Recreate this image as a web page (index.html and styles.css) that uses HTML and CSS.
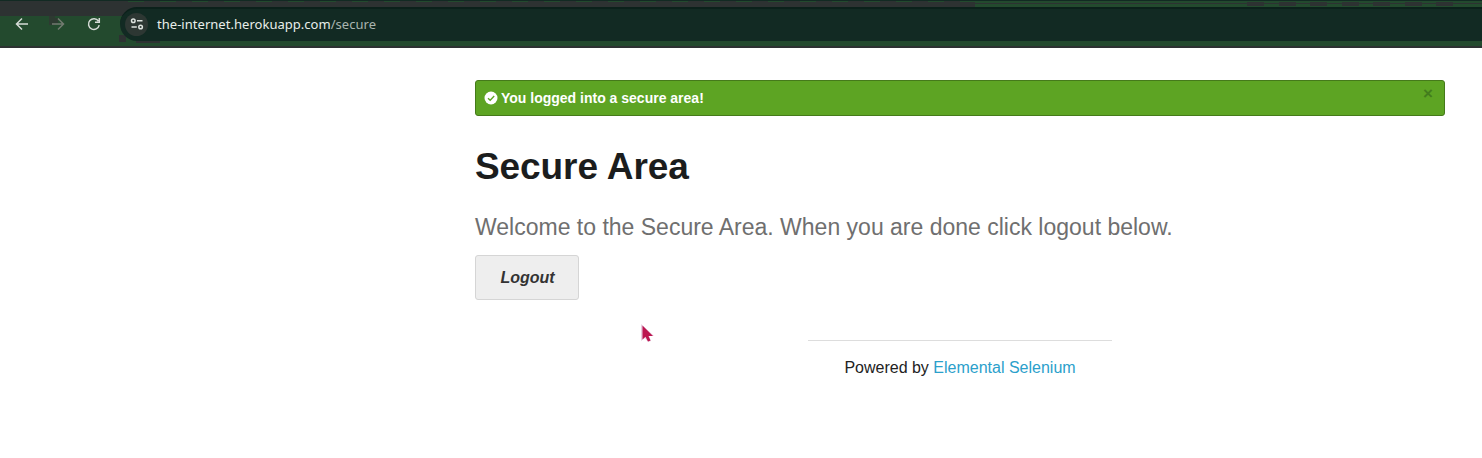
FILE: index.html
```html
<!DOCTYPE html>
<html lang="en">
<head>
<meta charset="utf-8">
<title>The Internet</title>
<link rel="stylesheet" href="styles.css">
</head>
<body>
<header class="toolbar">
  <div class="tabstrip"><span class="tabs-left"></span><span class="tabs-right"><span class="tab-marks"></span></span></div>
  <nav class="nav">
    <svg class="nav-icon" viewBox="0 0 16 16"><path d="M14 8H2.5M8 2.5L2.500 8L8 13.5"/></svg>
    <svg class="nav-icon muted" viewBox="0 0 16 16"><path class="patch" d="M-1 0h6v2h3v5h-2v2h-7z"/><path d="M2 8h11.5M8 2.500L13.500 8L8 13.5"/></svg>
    <svg class="nav-icon" viewBox="0 0 16 16"><path d="M13.2 9.2A5.4 5.4 0 1 1 12.4 5M13.3 2v4.3H9"/></svg>
  </nav>
  <div class="address">
    <span class="site-info"><svg viewBox="0 0 14 14"><circle cx="3.3" cy="3.7" r="1.8"/><path d="M7 3.7h5.5M1.5 10h5.3"/><circle cx="10.6" cy="10" r="1.8"/></svg></span>
    <span class="url">the-internet.herokuapp.com<span class="path">/secure</span></span>
  </div>
</header>
<main class="page">
  <div class="alert">
    <svg class="check" viewBox="0 0 14 14"><circle cx="7" cy="7" r="6.5"/><path d="M4 7.2l2.2 2.1L10.2 5"/></svg>
    <span class="message">You logged into a secure area!</span>
    <span class="close">×</span>
  </div>
  <h1>Secure Area</h1>
  <h2>Welcome to the Secure Area. When you are done click logout below.</h2>
  <a class="button">Logout</a>
</main>
<footer class="footer">Powered by <a>Elemental Selenium</a></footer>
<svg class="cursor" viewBox="0 0 16 20"><path class="shade" d="M1 1v17l4-3 3 4 3-1-2-5h5z"/><path class="arrow" d="M2.500 2.500v14l3-2.800 2.500 4.800 2.500-1-2-4.500h4.500z"/></svg>
</body>
</html>
```
FILE: styles.css
```css
* { box-sizing: border-box; }
body { margin: 0; height: 458px; overflow: hidden; background: #fff; font-family: "Liberation Sans", Arial, sans-serif; }
.toolbar { height: 48px; display: grid; grid-template: 7px 34px / 120px 1fr; background: linear-gradient(#2d3232, #2d3232) 136px 41px / 24px 2px no-repeat, linear-gradient(#2d3232, #2d3232) 119px 35px / 7px 7px no-repeat, linear-gradient(#2d3232 16px, #234a2e 16px); border-bottom: 2px solid #2d3232; }
.tabstrip { grid-column: 1 / 3; display: flex; border-top: 1px solid #122a23; }
.tabs-left { width: 975px; background: repeating-linear-gradient(90deg, #234a2e 0 16px, transparent 16px 32px) 128px 0 / 847px 1px no-repeat, #2d3232; }
.tabs-right { flex: 1; display: flex; align-items: center; padding-left: 272px; background: linear-gradient(#234a2e 2px, #2d3232 2px 3px, #234a2e 3px); }
.tab-marks { width: 210px; height: 4px; background: repeating-linear-gradient(90deg, #2d3232 0 17px, transparent 17px 31.5px); }
.nav { display: flex; align-items: center; gap: 20px; padding-left: 14px; }
.nav-icon { width: 16px; height: 16px; fill: none; stroke: #d5dbd6; stroke-width: 1.5; overflow: visible; }
.muted { stroke: #727b70; }
.muted .patch { fill: #2d3a31; stroke: none; }
.address { display: flex; align-items: center; gap: 9px; padding: 0 0 2px 5px; background: #122a23; border-top: 2px solid #0b211b; border-radius: 17px 0 0 17px; }
.site-info { width: 23px; height: 23px; display: grid; place-items: center; background: #2d3733; border-radius: 50%; }
.site-info svg { width: 14px; height: 14px; fill: none; stroke: #dce2de; stroke-width: 1.5; }
.url { font: 13px "Noto Sans", sans-serif; letter-spacing: 0.03px; color: #e8eeea; }
.path { color: #a9b5af; }
.page { margin-left: 475px; width: 970px; padding-top: 32px; }
.alert { height: 36px; display: flex; align-items: center; padding: 0 11px 0 8px; background: #5da423; border: 1px solid #457a1a; border-radius: 3px; color: #fff; font-size: 14px; font-weight: bold; }
.check { width: 14px; height: 14px; margin-right: 3px; fill: #fff; }
.check path { fill: none; stroke: #5da423; stroke-width: 1.3; }
.close { margin: -9px 0 0 auto; font-size: 17px; color: #437d1d; }
h1 { margin: 24px 0 0; font-size: 37px; line-height: 54px; letter-spacing: -0.08px; color: #1b1d1d; }
h2 { margin: 17px 0 0; font-size: 23px; font-weight: normal; line-height: 32px; color: #6f6f6f; white-space: nowrap; }
.button { display: flex; width: 104px; height: 45px; margin-top: 12px; padding-left: 1px; align-items: center; justify-content: center; background: #eee; border: 1px solid #d5d5d5; border-radius: 3px; color: #333; font-size: 16px; font-style: italic; font-weight: bold; }
.footer { width: 304px; margin: 40px 0 0 808px; padding-top: 18px; border-top: 1px solid #ddd; text-align: center; font-size: 16px; color: #222; }
.footer a { color: #2ba0cb; }
.cursor { position: absolute; left: 640px; top: 323px; width: 16px; height: 20px; }
.shade { fill: #e8cfe1; }
.arrow { fill: #bc1650; }
```
